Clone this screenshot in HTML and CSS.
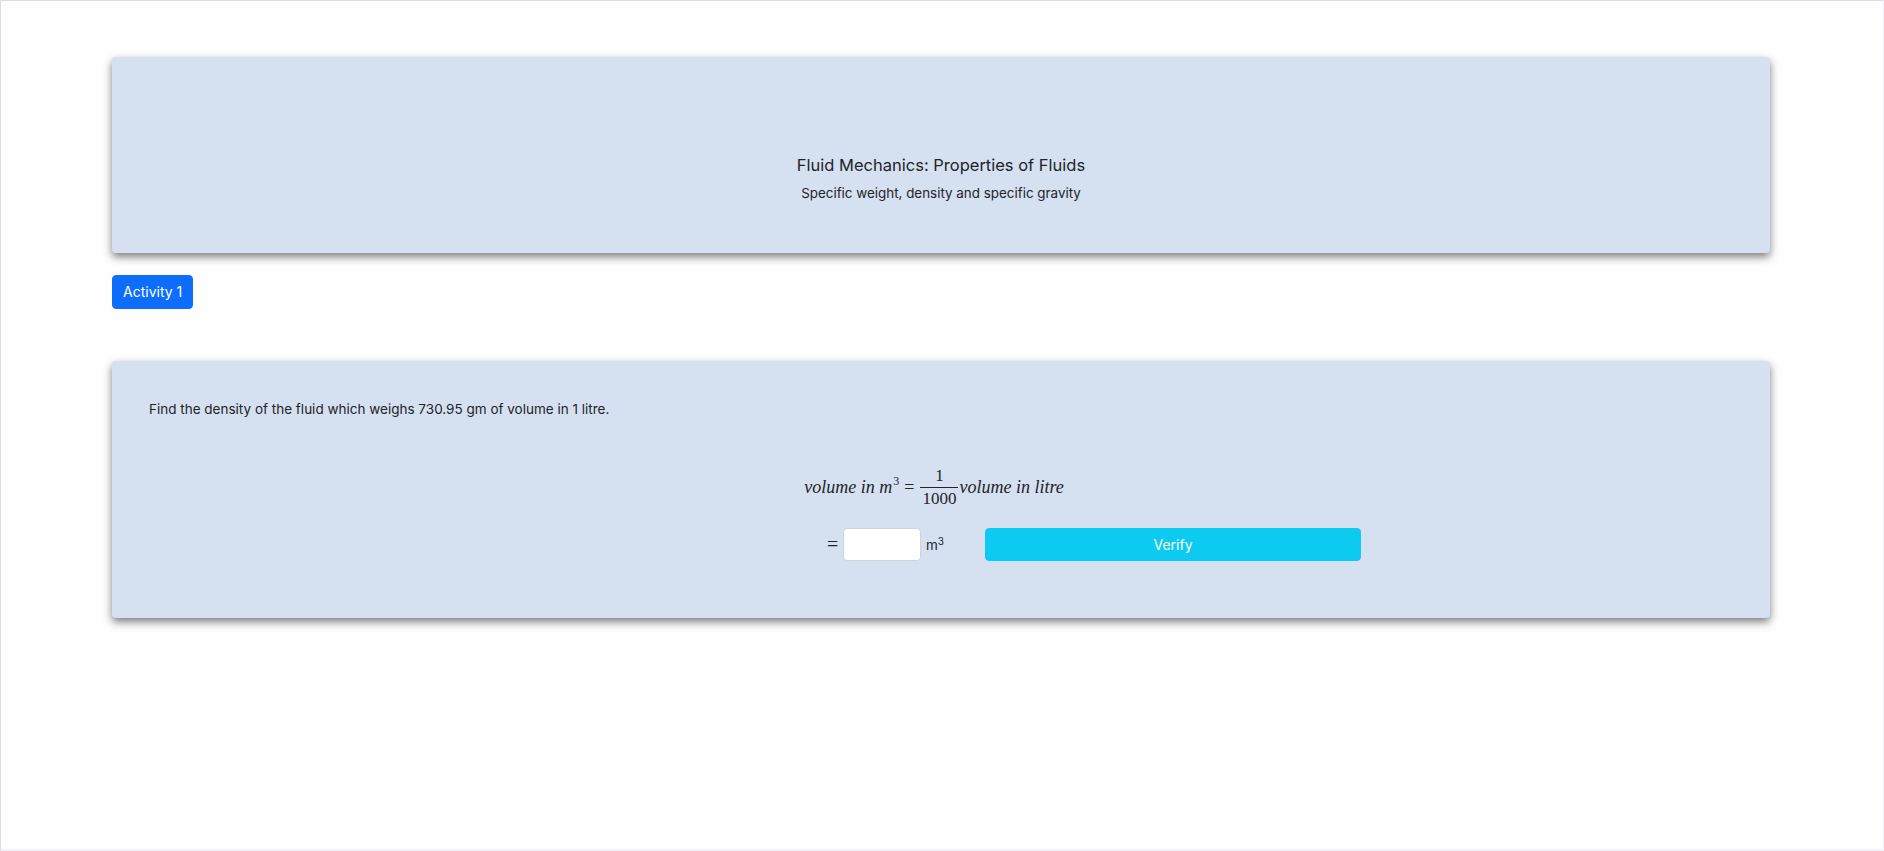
FILE: index.html
```html
<!DOCTYPE html>
<html lang="en">
<head>
<meta charset="utf-8">
<title>Fluid Mechanics: Properties of Fluids</title>
<link rel="stylesheet" href="styles.css">
</head>
<body>
<div class="frame">
  <main class="page">
    <section class="card header-card">
      <h1 class="title">Fluid Mechanics: Properties of Fluids</h1>
      <p class="subtitle">Specific weight, density and specific gravity</p>
    </section>
    <div class="tabs">
      <button class="btn-activity" type="button">Activity 1</button>
    </div>
    <section class="card task-card">
      <p class="question">Find the density of the fluid which weighs 730.95 gm of volume in 1 litre.</p>
      <div class="math-line">
        <span class="mi">volume in m<sup class="msup">3</sup></span>
        <span class="mo">=</span>
        <span class="frac">
          <span class="num">1</span>
          <span class="den">1000</span>
        </span>
        <span class="mi">volume in litre</span>
      </div>
      <div class="answer-row">
        <span class="mo eq">=</span>
        <input class="answer-input" type="text" aria-label="volume in cubic metres">
        <span class="unit">m<sup>3</sup></span>
        <button class="btn-verify" type="button">Verify</button>
      </div>
    </section>
  </main>
</div>
</body>
</html>
```

FILE: styles.css
```css
html, body {
  margin: 0;
  padding: 0;
  background: #ffffff;
}

body {
  font-family: Inter, "Liberation Sans", Arial, sans-serif;
  color: #212529;
}

.frame {
  box-sizing: border-box;
  width: 1884px;
  height: 851px;
  border-top: 1px solid #dcdce4;
  border-left: 1px solid #dcdce4;
  border-right: 1px solid #f2f2f8;
  border-bottom: 2px solid #f2f2f8;
  background: #fefeff;
}

.page {
  width: 1658px;
  margin-left: 111px;
  padding-top: 56px;
}

.card {
  background: #d5e0f1;
  border-radius: 4px;
  box-shadow: 0 4px 8px rgba(0, 0, 0, 0.5);
  box-sizing: border-box;
}

.header-card {
  height: 196px;
  padding-top: 96px;
  text-align: center;
}

.title {
  margin: 0;
  font-size: 16.5px;
  line-height: 24px;
  font-weight: 400;
}

.subtitle {
  margin: 6px 0 0;
  font-size: 13.4px;
  line-height: 21px;
}

.tabs {
  padding-top: 22px;
  display: flex;
}

.btn-activity {
  font-family: inherit;
  font-size: 14px;
  line-height: 20px;
  padding: 6px 10px;
  border: 1px solid #0d6efd;
  background: #0d6efd;
  color: #ffffff;
  border-radius: 4px;
  min-width: 80px;
  box-sizing: border-box;
  height: 34px;
  white-space: nowrap;
}

.task-card {
  margin-top: 52px;
  height: 257px;
  padding: 38px 37px 0;
}

.question {
  margin: 0;
  font-size: 13.5px;
  line-height: 21px;
}

.math-line {
  margin-top: 45px;
  padding-right: 14px;
  display: flex;
  justify-content: center;
  align-items: center;
  font-family: "Liberation Serif", "DejaVu Serif", serif;
  font-size: 18px;
  height: 44px;
}

.mi {
  font-style: italic;
}

.msup {
  font-style: normal;
  font-size: 12px;
  vertical-align: 8px;
  line-height: 0;
  margin-left: 1px;
}

.mo {
  margin: 0 5px;
  font-style: normal;
}

.frac {
  display: inline-flex;
  flex-direction: column;
  align-items: center;
  margin: 0 1px;
  font-size: 17px;
}

.num {
  line-height: 20px;
  padding: 0 2px 1px;
}

.den {
  line-height: 20px;
  border-top: 1px solid #212529;
  padding: 1px 2px 0;
}

.answer-row {
  margin-top: 19px;
  margin-left: 678px;
  display: flex;
  align-items: center;
}

.eq {
  font-family: "Liberation Serif", "DejaVu Serif", serif;
  font-size: 20px;
  margin: 0 4px 0 0;
  width: 12px;
}

.answer-input {
  box-sizing: border-box;
  width: 78px;
  height: 33px;
  border: 1px solid #ced4da;
  border-radius: 4px;
  background: #ffffff;
  padding: 4px 8px;
  font-size: 14px;
}

.unit {
  margin-left: 5px;
  font-size: 13.5px;
}

.unit sup {
  font-size: 10px;
  line-height: 0;
}

.btn-verify {
  margin-left: 41px;
  width: 376px;
  height: 33px;
  box-sizing: border-box;
  border: 1px solid #0dcaf0;
  background: #0dcaf0;
  color: #ffffff;
  font-family: inherit;
  font-size: 14px;
  border-radius: 4px;
}
```
